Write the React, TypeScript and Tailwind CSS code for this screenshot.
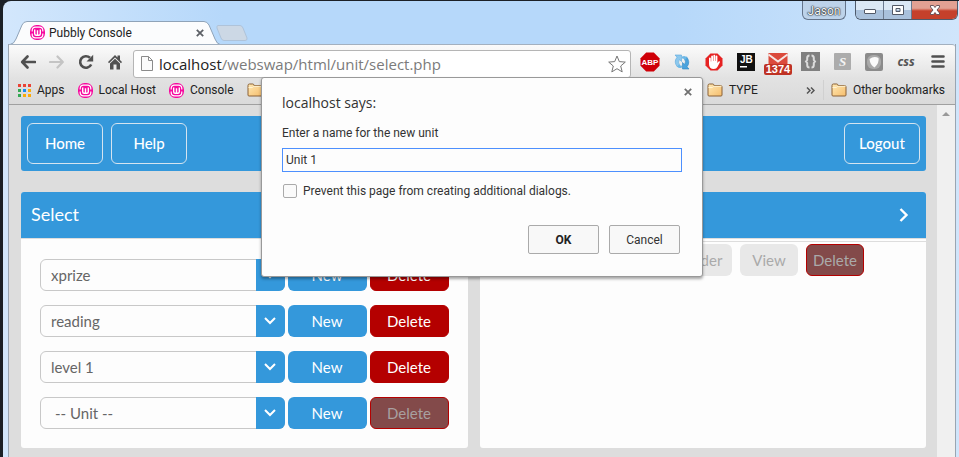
import type { ReactNode } from "react";

function WampLogo() {
  return (
    <svg viewBox="0 0 15 15" className="size-[15px] shrink-0" aria-hidden="true">
      <rect x="0" y="0" width="15" height="15" rx="6.500" fill="#f7099f" />
      <path d="M2.200 6.500V5.500Q2.200 2.200 5.500 2.200h4q3.300 0 3.300 3.300v1M2.200 8.500v1q0 3.300 3.300 3.300h4q3.300 0 3.300-3.300v-1" fill="none" stroke="#fff" strokeWidth="1.200" />
      <path d="M4.700 4.500v4.200q0 1.500 1.400 1.500h2.800q1.400 0 1.400-1.500V4.500M7.500 5.200v4.800" fill="none" stroke="#fff" strokeWidth="1.400" />
    </svg>
  );
}

function FolderIcon() {
  return (
    <svg viewBox="0 0 16 14" className="h-[14px] w-4 shrink-0" aria-hidden="true">
      <defs>
        <linearGradient id="folder" x1="0" y1="0" x2="1" y2="1">
          <stop offset="0" stopColor="#ffe9b5" />
          <stop offset="1" stopColor="#f5bd6c" />
        </linearGradient>
      </defs>
      <path d="M1 12V2.600Q1 1 2.400 1h3.400Q7 1 7 2.600h6.600q1.400 0 1.400 1.200V12q0 1-1 1H2q-1 0-1-1z" fill="url(#folder)" stroke="#8a6136" />
      <path d="M1.500 4.500h4l1.200-1.200h7.800" fill="none" stroke="#fff3d2" />
    </svg>
  );
}

function AppsIcon() {
  const colors = ["#ea4335", "#ea4335", "#ea4335", "#34a853", "#1a8cf0", "#fbab0a", "#34a853", "#fbab0a", "#fbab0a"];
  return (
    <svg viewBox="0 0 13 13" className="size-[13px] shrink-0" aria-hidden="true">
      {colors.map((c, i) => (
        <rect key={i} x={(i % 3) * 5} y={Math.floor(i / 3) * 5} width="3" height="3" fill={c} />
      ))}
    </svg>
  );
}

function CloseGlyph() {
  return (
    <svg viewBox="0 0 8 8" className="size-2" aria-hidden="true">
      <path d="M.8.8l6.400 6.400M7.200.8L.8 7.200" stroke="currentColor" strokeWidth="1.800" />
    </svg>
  );
}

function TitleBar() {
  return (
    <header className="flex h-[43px] items-start">
      <div className="relative ml-[7px] mt-5 flex h-[23px] w-[210px] items-center pl-5 pr-4">
        <svg viewBox="0 0 210 24" className="absolute left-0 top-0 h-6 w-[210px]" aria-hidden="true">
          <path d="M0 23.500Q4 23 6 18L12 4Q13.500 .5 17 .5H194Q197 .5 199 4L205 18Q207 23 210 23.500V24H0z" fill="#fbfcfd" />
          <path d="M0 23.500Q4 23 6 18L12 4Q13.500 .5 17 .5H194Q197 .5 199 4L205 18Q207 23 210 23.500" fill="none" stroke="#8fa3b8" />
        </svg>
        <span className="relative flex w-full items-center gap-1 text-xs">
          <WampLogo />
          <span className="flex-1 whitespace-nowrap">Pubbly Console</span>
          <button type="button" aria-label="Close tab" className="text-[#5c6066]">
            <CloseGlyph />
          </button>
        </span>
      </div>
      <button type="button" aria-label="New tab" className="-ml-1 mt-6">
        <svg viewBox="0 0 32 16" className="h-4 w-8" aria-hidden="true">
          <path d="M2 .5H24Q26 .5 27 3L31 13Q31.500 15.500 29 15.500H8Q6 15.500 5 13L1 3Q.5 .5 2 .5z" fill="#ccd8e5" stroke="#afc3d9" />
        </svg>
      </button>
      <div className="flex-1" />
      <button type="button" className="mr-[9px] h-[19px] w-11 rounded-b-md border border-t-0 border-[#64748a] bg-[#bdd3ea] text-xs leading-5 text-[#f4f8fc] [text-shadow:0_0_1px_#222,0_0_1px_#222,0_0_2px_#222]">
        Jason
      </button>
      <div className="mr-px flex h-[19px] overflow-hidden rounded-b-md border border-t-0 border-[#4e5a6b]">
        <button type="button" aria-label="Minimize" className="flex w-7 items-center justify-center border-r border-[#6b7a8f] bg-linear-to-b from-[#dbe8f5] from-50% to-[#a9c1dc] to-50%">
          <svg viewBox="0 0 12 6" className="mt-1 h-[6px] w-3" aria-hidden="true">
            <rect x=".5" y=".5" width="11" height="4" rx=".5" fill="#fff" stroke="#525967" />
          </svg>
        </button>
        <button type="button" aria-label="Maximize" className="flex w-7 items-center justify-center border-r border-[#6b7a8f] bg-linear-to-b from-[#dbe8f5] from-50% to-[#a9c1dc] to-50%">
          <svg viewBox="0 0 12 10" className="h-[10px] w-3" aria-hidden="true">
            <path d="M.5.5h11v9H.5zM4 3.500h4v3H4z" fill="#fff" fillRule="evenodd" stroke="#525967" />
          </svg>
        </button>
        <button type="button" aria-label="Close window" className="flex w-[45px] items-center justify-center bg-linear-to-b from-[#e2a193] from-40% to-[#c5402b] to-55%">
          <svg viewBox="0 0 12 10" className="h-[10px] w-3" aria-hidden="true">
            <path d="M1.500 .5h3L6 2.500 7.500 .5h3V2L8 5l2.500 3v1.500h-3L6 7.500 4.500 9.500h-3V8L4 5 1.500 2z" fill="#fff" stroke="#5e4a50" strokeWidth=".9" />
          </svg>
        </button>
      </div>
    </header>
  );
}

function BarButton({ label, wide, children }: { label: string; wide?: boolean; children: ReactNode }) {
  return (
    <button type="button" aria-label={label} className={`flex h-8 items-center justify-center ${wide ? "w-8" : "w-[29px]"}`}>
      {children}
    </button>
  );
}

function Extensions() {
  return (
    <div className="flex items-center">
      <BarButton label="Adblock Plus" wide>
        <svg viewBox="0 0 20 20" className="size-5">
          <path d="M6.200.5h7.600l5.700 5.700v7.600l-5.700 5.700H6.200L.5 13.800V6.200z" fill="#cf0008" />
          <text x="10" y="13" textAnchor="middle" fontSize="8" fontWeight="700" fill="#fff" fontFamily="Liberation Sans, sans-serif">ABP</text>
        </svg>
      </BarButton>
      <BarButton label="Refresh" wide>
        <svg viewBox="0 0 16 16" className="size-4">
          <path d="M1 1h6.500v6.500L5.500 5.600Q3.500 8 5.500 11L3.500 13Q-.8 8 3 3.200z" fill="#8cc8ee" stroke="#5aa7dc" strokeWidth=".6" />
          <path d="M15 15H8.500V8.500l2 1.900Q12.500 8 10.500 5l2-2.200Q16.800 8 13 12.800z" fill="#4ba3dd" stroke="#2f86c4" strokeWidth=".6" />
          <path d="M8 2.500Q11 1 13 3.500L11 6Q10 4 8 4.500zM8 13.500Q5 15 3 12.500L5.500 10.500Q6 12 8 11.500z" fill="#6db8e6" />
        </svg>
      </BarButton>
      <BarButton label="Ad blocker" wide>
        <svg viewBox="0 0 18 18" className="size-[18px]">
          <path d="M5.500.5h7l5 5v7l-5 5h-7l-5-5v-7z" fill="#e62222" />
          <path d="M4 9.500V5.300a.9.900 0 011.800 0V8.500h.4V3.400a.9.900 0 011.800 0V8h.4V2.600a.9.900 0 011.800 0V8h.4V3.500a.9.900 0 011.800 0V10l1.200-1.500c.8-.7 1.700 0 1.200.9l-2.400 4.500Q11.500 16 8.800 16 4 16 4 11z" fill="#fff" />
        </svg>
      </BarButton>
      <BarButton label="JetBrains" wide>
        <svg viewBox="0 0 18 18" className="size-[18px]">
          <rect width="18" height="18" fill="#111" />
          <text x="3" y="10" fontSize="10" fontWeight="700" fill="#fff" fontFamily="Liberation Sans, sans-serif">JB</text>
          <rect x="3" y="13" width="7" height="1.500" fill="#fff" />
        </svg>
      </BarButton>
      <BarButton label="Mail, 1374 unread" wide>
        <svg viewBox="0 0 28 23" className="mt-[5px] h-[23px] w-7 shrink-0">
          <path d="M4.500 0h19v14h-19z" fill="#db4a3c" />
          <path d="M4.500 1.500L14 8.500l9.500-7" fill="none" stroke="#f6e6e4" strokeWidth="2" />
          <rect x="0" y="11" width="28" height="11" rx="2" fill="#bf3224" />
          <text x="14" y="20" textAnchor="middle" fontSize="11" fontWeight="700" fill="#fff" fontFamily="Liberation Sans, sans-serif">1374</text>
        </svg>
      </BarButton>
      <BarButton label="Brackets" wide>
        <svg viewBox="0 0 19 19" className="size-[19px]">
          <rect width="19" height="19" fill="#808080" />
          <path d="M8.500 3.500Q6.200 3.500 6.200 6v2L5 9.500 6.200 11v2q0 2.500 2.300 2.500M10.500 3.500q2.300 0 2.300 2.500v2L14 9.500 12.800 11v2q0 2.500-2.300 2.500" fill="none" stroke="#dcdcdc" strokeWidth="2" />
        </svg>
      </BarButton>
      <BarButton label="Stylish" wide>
        <svg viewBox="0 0 17 17" className="size-[17px]">
          <rect width="17" height="17" rx="1" fill="#acacac" />
          <text x="8.500" y="13" textAnchor="middle" fontSize="13" fontWeight="700" fontStyle="italic" fill="#f4f4f4" fontFamily="Liberation Serif, serif">S</text>
        </svg>
      </BarButton>
      <BarButton label="Shapes" wide>
        <svg viewBox="0 0 18 18" className="size-[18px]">
          <rect width="18" height="18" rx="2" fill="#8b8b8b" />
          <rect x="2" y="2" width="14" height="14" rx="6" fill="#a9a9a9" />
          <path d="M4.500 6Q9 2.500 13.500 5q1 5-4 9.500Q5 12 4.500 6z" fill="#fafafa" />
        </svg>
      </BarButton>
      <BarButton label="CSS" wide>
        <span className="font-[Noto_Sans,sans-serif] text-xs font-bold italic text-[#555]">css</span>
      </BarButton>
      <BarButton label="Menu" wide>
        <svg viewBox="0 0 14 13" className="h-[13px] w-[14px]">
          <path d="M1.500 1.500h11M1.500 6.500h11M1.500 11.500h11" stroke="#505050" strokeWidth="2.600" strokeLinecap="round" />
        </svg>
      </BarButton>
    </div>
  );
}

function Toolbar() {
  return (
    <div className="flex h-[34px] items-center rounded-tr-[3px] border-t border-[#a3b0bf] bg-linear-to-b from-[#fbfbfb] to-[#e2e2e2] pl-1 pr-px">
      <BarButton label="Back">
        <svg viewBox="0 0 16 14" className="h-[14px] w-4">
          <path d="M15 7H2.500M7.500 1.500L2.200 7l5.300 5.500" fill="none" stroke="#505050" strokeWidth="2.600" strokeLinejoin="round" strokeLinecap="round" />
        </svg>
      </BarButton>
      <BarButton label="Forward">
        <svg viewBox="0 0 16 14" className="h-[14px] w-4">
          <path d="M1 7h12.500M8.500 1.500L13.800 7l-5.300 5.500" fill="none" stroke="#c4c4c4" strokeWidth="2.200" strokeLinejoin="round" strokeLinecap="round" />
        </svg>
      </BarButton>
      <BarButton label="Reload">
        <svg viewBox="0 0 16 16" className="size-4">
          <path d="M13.200 10.500A5.800 5.800 0 1 1 12 3.800" fill="none" stroke="#505050" strokeWidth="2.600" />
          <path d="M15.200 .8V7.500H8.500z" fill="#505050" />
        </svg>
      </BarButton>
      <BarButton label="Home">
        <svg viewBox="0 0 16 16" className="size-4">
          <path d="M8 1L1 8l1 1.200L8 3.500l6 5.700L15 8l-2-2V1.500h-2.500V3.500z" fill="#505050" />
          <path d="M3 9.500l5-4.800 5 4.800V15.500H9.500V10.500h-3v5H3z" fill="#505050" />
        </svg>
      </BarButton>
      <div className="ml-1 mr-[3px] mt-1 flex h-7 min-w-0 flex-1 items-center rounded-[3px] border border-[#b5b5b5] bg-white pl-[7px] pr-1">
        <svg viewBox="0 0 12 15" className="h-[15px] w-3 shrink-0" aria-hidden="true">
          <path d="M.5.500H7.500L11.500 4.500V14.500H.5zM7.500.500V4.500H11.500" fill="#fbfbfb" stroke="#8b8b8b" />
        </svg>
        <a href="#top" className="ml-[6px] flex-1 whitespace-nowrap font-[Open_Sans,sans-serif] text-[15px] leading-6 text-[#7b7b7b]">
          <span className="text-[#222]">localhost</span>/webswap/html/unit/select.php
        </a>
        <button type="button" aria-label="Bookmark this page">
          <svg viewBox="0 0 18 18" className="size-[18px]">
            <path d="M9 1l2.300 5.600 6 .5-4.600 3.900 1.500 5.900L9 13.700l-5.200 3.200 1.500-5.900L.7 7.100l6-.5z" fill="#fff" stroke="#777" strokeLinejoin="round" />
          </svg>
        </button>
      </div>
      <Extensions />
    </div>
  );
}

function Bookmark({ icon, children }: { icon: ReactNode; children?: ReactNode }) {
  return (
    <a href="#top" className="flex items-center gap-[6px] whitespace-nowrap">
      {icon}
      {children}
    </a>
  );
}

function BookmarksBar() {
  return (
    <nav aria-label="Bookmarks" className="flex h-[27px] items-center border-b border-[#a0a0a0] bg-linear-to-b from-[#e2e2e2] to-[#dadada] pb-[2px] pl-[9px] pr-[10px] text-xs">
      <div className="flex flex-1 items-center gap-[13px]">
        <Bookmark icon={<AppsIcon />}>Apps</Bookmark>
        <Bookmark icon={<WampLogo />}>Local Host</Bookmark>
        <Bookmark icon={<WampLogo />}>Console</Bookmark>
        <Bookmark icon={<FolderIcon />} />
      </div>
      <Bookmark icon={<FolderIcon />}>TYPE</Bookmark>
      <button type="button" aria-label="More bookmarks" className="ml-12 mr-2">
        <svg viewBox="0 0 9 7" className="h-[7px] w-[9px]">
          <path d="M1 .5l3 3-3 3M5 .5l3 3-3 3" fill="none" stroke="#555" strokeWidth="1.500" />
        </svg>
      </button>
      <span className="mr-[7px] h-5 w-px bg-[#d0d0d0]" />
      <Bookmark icon={<FolderIcon />}>Other bookmarks</Bookmark>
    </nav>
  );
}

function NavButton({ children }: { children: ReactNode }) {
  return (
    <button type="button" className="h-[41px] w-[76px] rounded-md border border-[#d5e4f0] text-[15px] font-medium text-white">
      {children}
    </button>
  );
}

function SelectRow({ name, value, indent, locked }: { name: string; value: string; indent?: boolean; locked?: boolean }) {
  return (
    <div className="flex gap-[3px] text-[15px]">
      <div className="relative min-w-0 flex-1">
        <select
          aria-label={name}
          className={`h-8 w-full appearance-none rounded-md border border-[#c8c8c8] bg-[#fdfdfd] text-[#666] outline-none ${indent ? "pl-[14px]" : "pl-[10px]"}`}
        >
          <option>{value}</option>
        </select>
        <span className="pointer-events-none absolute inset-y-0 right-0 flex w-[29px] items-center justify-center rounded-r-md bg-[#3498db]">
          <svg viewBox="0 0 12 8" className="h-2 w-3" aria-hidden="true">
            <path d="M1 1l5 5 5-5" fill="none" stroke="#fff" strokeWidth="2" />
          </svg>
        </span>
      </div>
      <button type="button" className="h-8 w-[79px] rounded-md bg-[#3498db] text-white">New</button>
      <button
        type="button"
        disabled={locked}
        className={`h-8 w-[79px] rounded-md border border-[#b40000] ${locked ? "bg-[#834a4a] text-[#a8a0a0]" : "bg-[#b40000] text-white"}`}
      >
        Delete
      </button>
    </div>
  );
}

function Page() {
  return (
    <div className="flex flex-1 bg-[#ddd] font-[Lato,sans-serif]">
      <main className="flex-1 pb-[9px] pl-3 pr-[11px] pt-[11px]">
        <nav className="flex gap-2 rounded-[3px] bg-[#3498db] px-[6px] py-[7px]">
          <NavButton>Home</NavButton>
          <NavButton>Help</NavButton>
          <span className="flex-1" />
          <NavButton>Logout</NavButton>
        </nav>
        <div className="mt-[21px] grid grid-cols-2 gap-3">
          <section className="rounded-[3px] bg-[#fdfdfd]">
            <h2 className="h-[46px] rounded-t-[3px] bg-[#3498db] pl-[10px] text-lg leading-[44px] text-white">Select</h2>
            <div className="flex flex-col gap-[14px] border-t border-[#ddd] px-[19px] pb-[19px] pt-5">
              <SelectRow name="Group" value="xprize" />
              <SelectRow name="Subject" value="reading" />
              <SelectRow name="Level" value="level 1" />
              <SelectRow name="Unit" value="-- Unit --" indent locked />
            </div>
          </section>
          <section className="rounded-[3px] bg-[#fdfdfd]">
            <div className="flex h-[46px] items-center justify-end rounded-t-[3px] bg-[#3498db] pr-[17px]">
              <button type="button" aria-label="Next">
                <svg viewBox="0 0 10 14" className="h-[14px] w-[10px]">
                  <path d="M1.500 1l6 6-6 6" fill="none" stroke="#fff" strokeWidth="2.400" />
                </svg>
              </button>
            </div>
            <div className="h-1 border-y border-[#ddd]" />
            <div className="flex justify-end gap-2 pr-[62px] pt-[2px] text-[15px] text-[#aaa]">
              <button type="button" disabled className="h-8 w-[58px] rounded-md bg-[#e8e8e8]">Order</button>
              <button type="button" disabled className="h-8 w-[58px] rounded-md bg-[#e8e8e8]">View</button>
              <button type="button" disabled className="h-8 w-[58px] rounded-md border border-[#b40000] bg-[#834a4a]">Delete</button>
            </div>
          </section>
        </div>
      </main>
      <div className="flex w-[18px] justify-center bg-[#f0f0f0] pt-[7px]">
        <svg viewBox="0 0 8 4" className="h-1 w-2" aria-hidden="true">
          <path d="M0 4l4-4 4 4z" fill="#999" />
        </svg>
      </div>
    </div>
  );
}

function PromptDialog() {
  return (
    <form
      role="dialog"
      aria-label="localhost says:"
      className="absolute left-1/2 top-[33px] w-[442px] -translate-x-1/2 rounded-[3px] border border-[#999] bg-[#fdfdfd] px-5 pb-[22px] pt-[15px] text-xs leading-5 text-[#333] shadow-[0_2px_3px_rgba(0,0,0,0.35)]"
    >
      <button type="button" aria-label="Close dialog" className="absolute right-[10px] top-[10px] text-[#707070]">
        <CloseGlyph />
      </button>
      <h1 className="font-[Open_Sans,sans-serif] text-sm leading-5">localhost says:</h1>
      <label htmlFor="unit-name" className="mt-[10px] block">Enter a name for the new unit</label>
      <input
        id="unit-name"
        type="text"
        defaultValue="Unit 1"
        className="mt-[5px] block h-6 w-full border border-[#4d90fe] bg-[#fdfdfd] px-[3px] outline-none"
      />
      <label className="mt-[9px] flex items-center gap-[6px] pl-px">
        <input type="checkbox" className="size-[14px] appearance-none rounded-[2px] border border-[#aaa] bg-[#fafafa]" />
        Prevent this page from creating additional dialogs.
      </label>
      <div className="mr-[2px] mt-6 flex justify-end gap-[10px]">
        <button type="button" className="h-[29px] w-[71px] rounded-[2px] border border-[#aaa] bg-[#f8f8f8] font-bold text-[#222]">OK</button>
        <button type="button" className="h-[29px] w-[71px] rounded-[2px] border border-[#aaa] bg-[#f8f8f8]">Cancel</button>
      </div>
    </form>
  );
}

export default function App() {
  return (
    <div id="top" className="flex min-h-screen bg-[#1b2026] pl-[3px] pt-px font-[Roboto,sans-serif] text-[#222]">
      <div className="flex flex-1 flex-col rounded-tl-lg bg-[linear-gradient(90deg,#d3e7fc_0,#b6d8fa_220px,#b6d8fa_70%,#d0e5fb_100%)]">
        <TitleBar />
        <div className="relative ml-[5px] mr-[3px] flex flex-1 flex-col border-x border-[#9aa5b1]">
          <Toolbar />
          <BookmarksBar />
          <Page />
          <PromptDialog />
        </div>
      </div>
    </div>
  );
}
